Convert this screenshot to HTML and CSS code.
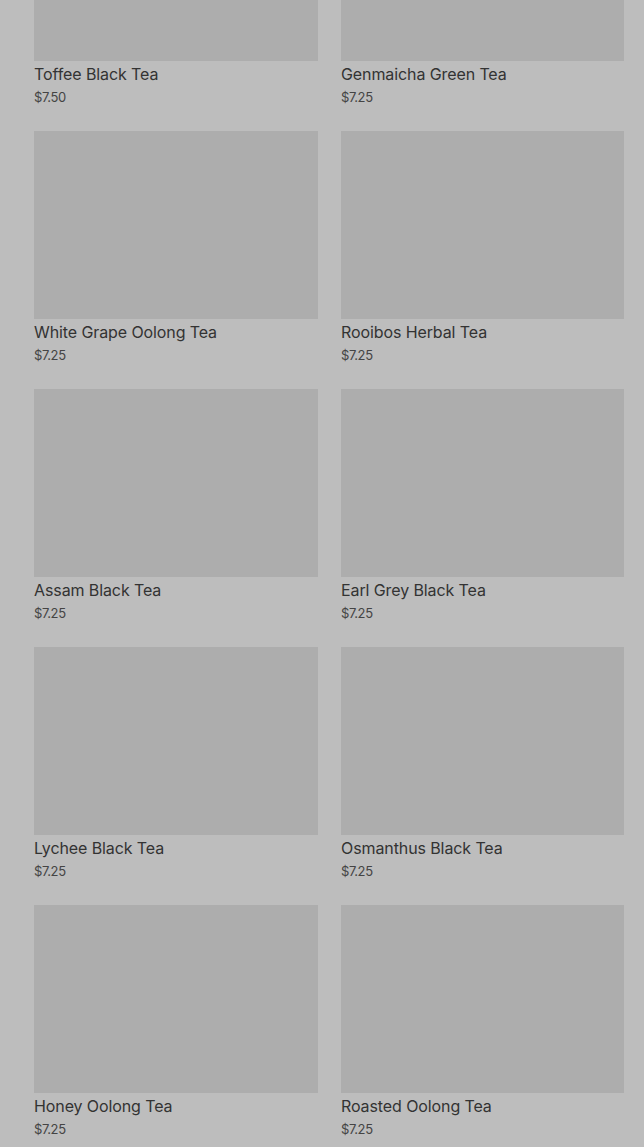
FILE: index.html
```html
<!DOCTYPE html>
<html lang="en">
<head>
    <meta charset="UTF-8">
    <meta name="viewport" content="width=device-width, initial-scale=1.0">
    <title>Tea Collection</title>
    <link rel="stylesheet" href="styles.css">
</head>
<body>
    <div class="collection">
        <div class="product-grid">
            <div class="product-card">
                <div class="product-image"></div>
                <h3 class="product-title">Toffee Black Tea</h3>
                <div class="product-price">$7.50</div>
            </div>
            <div class="product-card">
                <div class="product-image"></div>
                <h3 class="product-title">Genmaicha Green Tea</h3>
                <div class="product-price">$7.25</div>
            </div>
            <div class="product-card">
                <div class="product-image"></div>
                <h3 class="product-title">White Grape Oolong Tea</h3>
                <div class="product-price">$7.25</div>
            </div>
            <div class="product-card">
                <div class="product-image"></div>
                <h3 class="product-title">Rooibos Herbal Tea</h3>
                <div class="product-price">$7.25</div>
            </div>
            <div class="product-card">
                <div class="product-image"></div>
                <h3 class="product-title">Assam Black Tea</h3>
                <div class="product-price">$7.25</div>
            </div>
            <div class="product-card">
                <div class="product-image"></div>
                <h3 class="product-title">Earl Grey Black Tea</h3>
                <div class="product-price">$7.25</div>
            </div>
            <div class="product-card">
                <div class="product-image"></div>
                <h3 class="product-title">Lychee Black Tea</h3>
                <div class="product-price">$7.25</div>
            </div>
            <div class="product-card">
                <div class="product-image"></div>
                <h3 class="product-title">Osmanthus Black Tea</h3>
                <div class="product-price">$7.25</div>
            </div>
            <div class="product-card">
                <div class="product-image"></div>
                <h3 class="product-title">Honey Oolong Tea</h3>
                <div class="product-price">$7.25</div>
            </div>
            <div class="product-card">
                <div class="product-image"></div>
                <h3 class="product-title">Roasted Oolong Tea</h3>
                <div class="product-price">$7.25</div>
            </div>
        </div>
    </div>
</body>
</html>
```

FILE: styles.css
```css
body {
    margin: 0;
    background-color: #bdbdbd;
    font-family: Inter, Roboto, "Liberation Sans", Arial, sans-serif;
    color: #363636;
    overflow: hidden;
}
.collection {
    padding: 0 20px 0 34px;
}
.product-grid {
    display: grid;
    grid-template-columns: 284px 283px;
    column-gap: 23px;
    row-gap: 25px;
    margin-top: -127px;
}
.product-image {
    height: 188px;
    background-color: #adadad;
}
.product-title {
    margin: 3px 0 0;
    font-size: 16px;
    line-height: 20px;
    font-weight: 400;
    letter-spacing: -0.1px;
    color: #333;
}
.product-price {
    margin-top: 4px;
    font-size: 13px;
    line-height: 18px;
    letter-spacing: -0.4px;
    color: #444;
}
```
